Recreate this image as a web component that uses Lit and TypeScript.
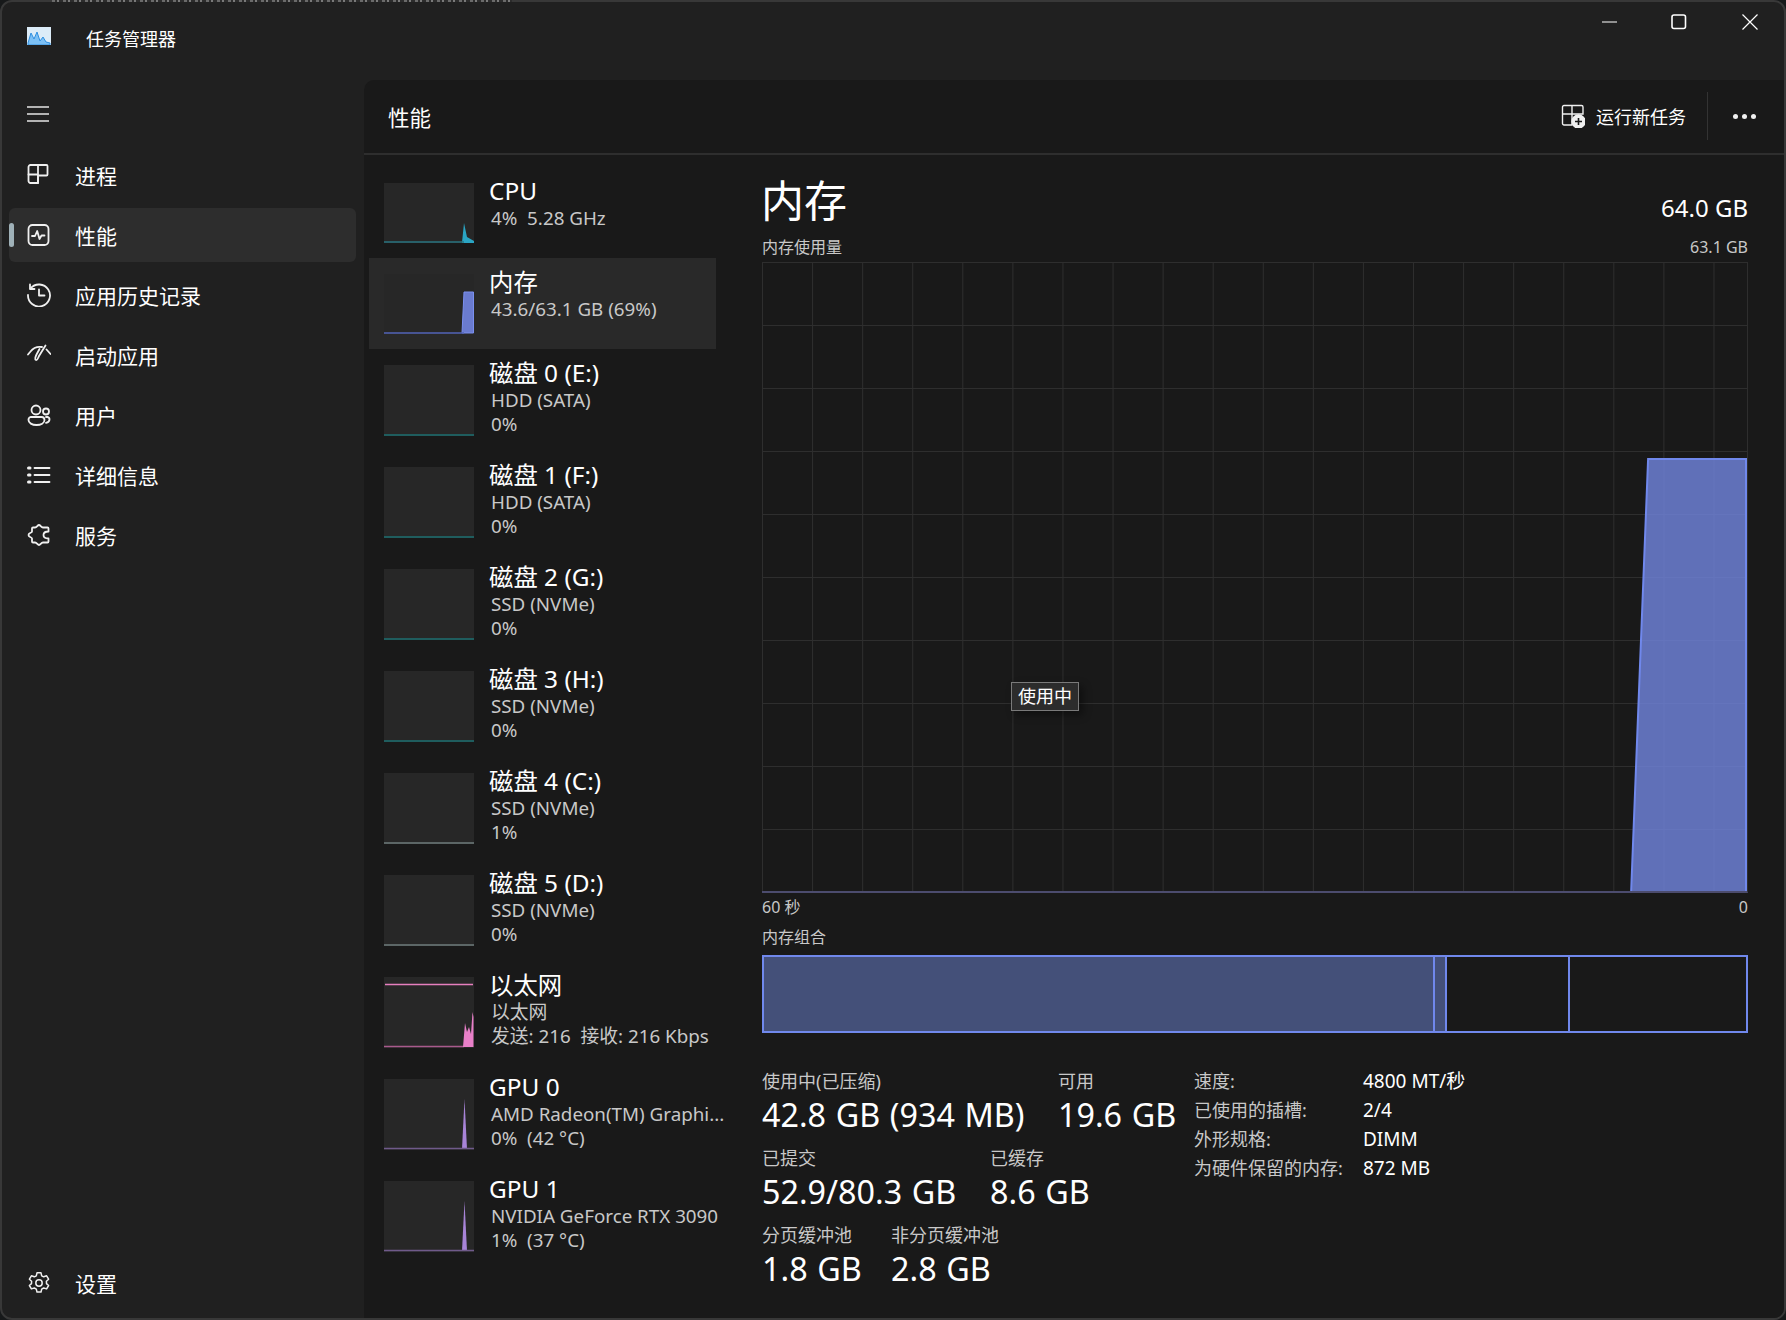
import { LitElement, html, css, svg } from "lit";
import { customElement } from "lit/decorators.js";

const navItems = [
  {
    label: "进程",
    icon: svg`<path d="M1.500 4a2 2 0 0 1 2-2h16a1 1 0 0 1 1 1v8.500a1 1 0 0 1-1 1H11V20H3.500a2 2 0 0 1-2-2z"/><path d="M11 2V20M1.500 11.500H11"/>`,
  },
  {
    label: "性能",
    active: true,
    icon: svg`<rect x="1.500" y="2" width="20" height="20" rx="4"/><path d="M5 13h3l2.200-5 2.300 8 2-3.500h3"/>`,
  },
  {
    label: "应用历史记录",
    icon: svg`<path d="M3.500 5.500A11 11 0 1 1 1 12"/><path d="M3 1.500v4.500h4.500M12 6.500v6h5.500"/>`,
  },
  {
    label: "启动应用",
    icon: svg`<path d="M1 11.500 3.500 8.500A12 12 0 0 1 15 4M19.500 6.500 23.500 11"/><path d="M18.500 2.500 12 13c-1 2-1.500 4.500-3 4s-.5-3.500 .5-5.500l3-5.500"/>`,
  },
  {
    label: "用户",
    icon: svg`<circle cx="9" cy="7" r="4.500"/><circle cx="19" cy="8.500" r="3"/><path d="M3.500 14h11a3 3 0 0 1 3 3c0 3-3.500 5-8 5s-8-2-8-5a3 3 0 0 1 2-3zM19 14h1.500a2.500 2.500 0 0 1 2 2.500c0 1.800-1.500 3-3.500 3.300"/>`,
  },
  {
    label: "详细信息",
    icon: svg`<path d="M7.500 5h15M7.500 12h15M7.500 19h15"/><path d="M1.500 5h1.500M1.500 12h1.500M1.500 19h1.500" stroke-width="3"/>`,
  },
  {
    label: "服务",
    icon: svg`<path transform="translate(0 .5)" d="M12 1.500c1.500 0 2 2.500 4 2.500h4.500a1 1 0 0 1 1 1v3c-2.500 0-5 1-5 3.500s2.500 3.500 5 3.500v3a1 1 0 0 1-1 1H16c-2 0-2.500 2.500-4 2.500s-2-2.500-4-2.500H6a1 1 0 0 1-1-1v-3c0-1.500-3.500-1-3.500-3.500s3.500-2 3.500-3.500V5a1 1 0 0 1 1-1h2c2 0 2.500-2.500 4-2.500z"/>`,
  },
];

const gearIcon = svg`<circle cx="12" cy="12" r="3.200"/><path d="M10 1.800h4l.7 3 2 1 2.900-1 2 3.400-2.200 2 .1 2.400 2.100 1.900-2 3.400-2.900-.9-2 1.100-.7 3h-4l-.7-3-2-1.100-2.900.9-2-3.400 2.100-1.900.1-2.400-2.200-2 2-3.400 2.900 1 2-1z"/>`;

interface Device {
  title: string;
  lines: string[];
  kind: string;
  selected?: boolean;
}

const devices: Device[] = [
  { title: "CPU", lines: ["4%  5.28 GHz"], kind: "cpu" },
  { title: "内存", lines: ["43.6/63.1 GB (69%)"], kind: "mem", selected: true },
  { title: "磁盘 0 (E:)", lines: ["HDD (SATA)", "0%"], kind: "disk" },
  { title: "磁盘 1 (F:)", lines: ["HDD (SATA)", "0%"], kind: "disk" },
  { title: "磁盘 2 (G:)", lines: ["SSD (NVMe)", "0%"], kind: "disk" },
  { title: "磁盘 3 (H:)", lines: ["SSD (NVMe)", "0%"], kind: "disk" },
  { title: "磁盘 4 (C:)", lines: ["SSD (NVMe)", "1%"], kind: "disk2" },
  { title: "磁盘 5 (D:)", lines: ["SSD (NVMe)", "0%"], kind: "disk2" },
  { title: "以太网", lines: ["以太网", "发送: 216  接收: 216 Kbps"], kind: "net" },
  { title: "GPU 0", lines: ["AMD Radeon(TM) Graphi...", "0%  (42 °C)"], kind: "gpu" },
  { title: "GPU 1", lines: ["NVIDIA GeForce RTX 3090", "1%  (37 °C)"], kind: "gpu" },
];

// little graph inside each thumbnail, coordinates in a 90 wide box
function thumbGraph(kind: string) {
  switch (kind) {
    case "cpu":
      return svg`<path d="M78 59.500 80 40l3 14 7 4v2H78z" fill="#2aa5c4"/><path d="M0 59h80" stroke="#2a7480" stroke-width="1.500"/>`;
    case "mem":
      return svg`<path d="M78 59 80 18h9.500v41z" fill="#6a7bd0" stroke="#7a90f0" stroke-width="1"/><path d="M0 59h80" stroke="#5365b8" stroke-width="1.500"/>`;
    case "disk":
      return svg`<path d="M0 70h90" stroke="#1f5d5e" stroke-width="2"/>`;
    case "disk2":
      return svg`<path d="M0 70h90" stroke="#5c6666" stroke-width="2"/>`;
    case "net":
      return svg`<path d="M1 7.500h88" stroke="#e67fbe" stroke-width="1.500"/><path d="M0 69.500h80" stroke="#a85a8c" stroke-width="1.500"/><path d="M79 70 81 46l2 9 2-5 2 7 1.500-22 1 5v30z" fill="#e87fc8"/>`;
    default:
      return svg`<path d="M78 70 80.500 20 83 70z" fill="#a884d8"/><path d="M0 69.500h90" stroke="#6f5a8a" stroke-width="1.500"/>`;
  }
}

@customElement("app-root")
export class AppRoot extends LitElement {
  static styles = css`
    :host {
      display: block;
      position: relative;
      width: 1786px;
      height: 1320px;
      background: #17191a;
      font-family: "Noto Sans", "Noto Sans CJK SC", sans-serif;
      color: #fff;
    }
    .sliver {
      position: absolute;
      left: 52px;
      top: 0;
      width: 460px;
      height: 2px;
      background: repeating-linear-gradient(
        to right,
        #6a6a6a 0 3px,
        #2c2c2c 3px 5px,
        #7a7a7a 5px 7px,
        #2c2c2c 7px 11px
      );
    }
    .window {
      box-sizing: border-box;
      width: 1786px;
      height: 1320px;
      border: 2px solid #383838;
      border-radius: 12px;
      background: #202020;
      display: grid;
      grid-template-columns: 362px 1fr;
      grid-template-rows: 78px 1fr;
      overflow: hidden;
    }
    .titlebar {
      grid-column: 1 / 3;
      display: flex;
      align-items: flex-start;
    }
    .app-icon {
      width: 24px;
      height: 18px;
      margin: 25px 0 0 25px;
    }
    .app-title {
      margin: 25px 0 0 35px;
      font-size: 18px;
      line-height: 24px;
      flex: 1;
    }
    .controls {
      display: flex;
    }
    .controls svg {
      display: block;
      width: 16px;
      height: 16px;
      fill: none;
      stroke: #fff;
      stroke-width: 1.200;
    }
    .ctl-min {
      margin: 12px 0 0 0;
    }
    .ctl-max {
      margin: 12px 0 0 53px;
    }
    .ctl-close {
      margin: 12px 26px 0 55px;
    }
    .sidebar {
      display: flex;
      flex-direction: column;
      padding: 10px 8px 8px 7px;
      box-sizing: border-box;
    }
    .burger {
      height: 48px;
      display: flex;
      align-items: center;
      padding-left: 18px;
      margin-bottom: 10px;
    }
    .burger svg {
      width: 22px;
      height: 16px;
      stroke: #e4e4e4;
      stroke-width: 1.500;
      fill: none;
    }
    .nav {
      display: flex;
      flex-direction: column;
      gap: 6px;
    }
    .item {
      position: relative;
      height: 54px;
      display: flex;
      align-items: center;
      gap: 24px;
      padding-left: 18px;
      border-radius: 6px;
      font-size: 21px;
    }
    .item.active {
      background: #2d2d2d;
    }
    .item.active::before {
      content: "";
      position: absolute;
      left: 0;
      top: 15px;
      width: 5px;
      height: 24px;
      border-radius: 3px;
      background: #9fb1b8;
    }
    .item svg {
      width: 24px;
      height: 24px;
      fill: none;
      stroke: #f0f0f0;
      stroke-width: 1.800;
      stroke-linecap: round;
      stroke-linejoin: round;
      flex: none;
    }
    .settings {
      margin-top: auto;
    }
    .settings svg {
      stroke-width: 1.500;
    }
    .panel {
      background: #191919;
      border-top-left-radius: 10px;
      display: flex;
      flex-direction: column;
      min-height: 0;
    }
    .panel-head {
      box-sizing: border-box;
      height: 75px;
      border-bottom: 2px solid #2e2e2e;
      display: flex;
      align-items: center;
      padding: 0 28px 2px 24px;
    }
    .panel-head h1 {
      margin: 2px 0 0;
      flex: 1;
      font-size: 21.500px;
      font-weight: 400;
    }
    .run {
      display: flex;
      align-items: center;
      gap: 11px;
      font-size: 18px;
    }
    .run svg {
      width: 24px;
      height: 24px;
      fill: none;
      stroke: #f0f0f0;
      stroke-width: 1.400;
    }
    .divider {
      width: 1px;
      height: 48px;
      margin: 0 25px 0 21px;
      background: #333;
    }
    .more {
      display: flex;
      gap: 4px;
      margin-top: 2px;
    }
    .more i {
      width: 5px;
      height: 5px;
      border-radius: 50%;
      background: #f0f0f0;
    }
    .body {
      display: flex;
      flex: 1;
      min-height: 0;
    }
    .list {
      width: 398px;
      flex: none;
      box-sizing: border-box;
      padding: 12px 0 0 5px;
    }
    .row {
      box-sizing: border-box;
      width: 347px;
      height: 102px;
      display: flex;
      gap: 15px;
      padding: 16px 0 0 15px;
    }
    .row.short {
      height: 91px;
    }
    .row.selected {
      background: #292929;
    }
    .thumb {
      display: block;
      flex: none;
      width: 90px;
      height: 71px;
      background: #272727;
    }
    .short .thumb {
      height: 60px;
    }
    .info {
      margin-top: -8px;
    }
    .info .name {
      font-size: 24.400px;
      line-height: 31px;
      white-space: nowrap;
    }
    .info .sub {
      font-size: 18.800px;
      line-height: 24px;
      color: #c8c8c8;
      padding-left: 2px;
      white-space: pre;
    }
    .main {
      width: 986px;
      flex: none;
    }
    .heading {
      display: flex;
      justify-content: space-between;
      padding-top: 18px;
    }
    .heading h2 {
      margin: 0 0 0 -1px;
      font-size: 43px;
      line-height: 56px;
      font-weight: 400;
    }
    .heading .total {
      font-size: 24px;
      line-height: 32px;
      margin-top: 19px;
    }
    .caption {
      display: flex;
      justify-content: space-between;
      font-size: 16px;
      line-height: 22px;
      color: #c8c8c8;
    }
    .cap-usage {
      margin-top: 7px;
    }
    .chart {
      position: relative;
      box-sizing: border-box;
      margin-top: 4px;
      height: 631px;
      border-bottom: 2px solid #4c4c6e;
      border-right: 1px solid #2e2e2e;
      background-color: #191919;
      background-image: linear-gradient(to right, #2e2e2e 1px, transparent 1px),
        linear-gradient(to bottom, #2e2e2e 1px, transparent 1px);
      background-size: 50.08px 63px;
    }
    .chart svg {
      position: absolute;
      inset: 0;
      width: 100%;
      height: 100%;
    }
    .tip {
      position: absolute;
      left: 249px;
      top: 420px;
      padding: 0 6px;
      height: 29px;
      box-sizing: border-box;
      border: 1.500px solid #7a7a7a;
      background: #2c2c2c;
      box-shadow: 4px 4px 8px rgba(0, 0, 0, 0.4);
      font-size: 18px;
      line-height: 26px;
      white-space: nowrap;
    }
    .cap-axis {
      margin-top: 3px;
    }
    .cap-comp {
      margin-top: 8px;
    }
    .bar {
      box-sizing: border-box;
      margin-top: 7px;
      height: 78px;
      border: 2px solid #7088ec;
      display: flex;
    }
    .seg {
      box-sizing: border-box;
      border-right: 2px solid #7088ec;
    }
    .seg.fill {
      background: #445079;
    }
    .seg:last-child {
      border-right: 0;
      flex: 1;
    }
    .stats {
      display: flex;
      margin-top: 37px;
    }
    .left {
      width: 432px;
      flex: none;
      display: flex;
      flex-direction: column;
      gap: 13px;
    }
    .stat-row {
      display: grid;
    }
    .r1 {
      grid-template-columns: 296px auto;
    }
    .r2 {
      grid-template-columns: 228px auto;
    }
    .r3 {
      grid-template-columns: 129px auto;
    }
    .stat .k {
      font-size: 18px;
      line-height: 24px;
      margin: -1px 0 1px;
      color: #c8c8c8;
    }
    .stat .v {
      font-size: 32.300px;
      word-spacing: 1.200px;
      line-height: 40px;
      white-space: nowrap;
    }
    .details {
      display: grid;
      grid-template-columns: 169px auto;
      grid-auto-rows: 29px;
      font-size: 19px;
      line-height: 29px;
      margin-top: -3px;
      white-space: nowrap;
    }
    .details .dk {
      font-size: 18px;
      color: #c8c8c8;
    }
  `;

  render() {
    return html`
      <div class="window">
        <div class="titlebar">
          <svg class="app-icon" viewBox="0 0 24 18">
            <rect width="24" height="18" fill="#dcecf8" />
            <path d="M1 16 4 6l3 6 3-7 3 9 3-4 3 5 4 1v2H1z" fill="#7cc0f5" stroke="#2f8fe0" stroke-width="1" />
          </svg>
          <div class="app-title">任务管理器</div>
          <div class="controls">
            <svg class="ctl-min" viewBox="0 0 16 16"><path d="M0 8h15" /></svg>
            <svg class="ctl-max" viewBox="0 0 16 16"><rect x="1" y="1" width="13.500" height="13.500" rx="2" stroke-width="1.600" /></svg>
            <svg class="ctl-close" viewBox="0 0 16 16"><path d="M.5.5l15 15M15.500.5l-15 15" /></svg>
          </div>
        </div>
        <nav class="sidebar">
          <div class="burger">
            <svg viewBox="0 0 22 16"><path d="M0 1h22M0 8h22M0 15h22" /></svg>
          </div>
          <div class="nav">
            ${navItems.map(
              (n) => html`<div class="item ${n.active ? "active" : ""}">
                <svg viewBox="0 0 24 24">${n.icon}</svg><span>${n.label}</span>
              </div>`
            )}
          </div>
          <div class="item settings">
            <svg viewBox="0 0 24 24">${gearIcon}</svg><span>设置</span>
          </div>
        </nav>
        <section class="panel">
          <header class="panel-head">
            <h1>性能</h1>
            <div class="run">
              <svg viewBox="0 0 24 24">
                <path d="M11 1.500h9.500a1.500 1.500 0 0 1 1.500 1.500v7H11zM11 1.500H3A1.500 1.500 0 0 0 1.500 3v7H11v11H3a1.500 1.500 0 0 1-1.500-1.500V10" />
                <circle cx="17.500" cy="17.500" r="6.500" fill="#f0f0f0" />
                <path d="M17.500 14v7M14 17.500h7" stroke="#191919" stroke-width="1.600" />
              </svg>
              <span>运行新任务</span>
            </div>
            <div class="divider"></div>
            <div class="more"><i></i><i></i><i></i></div>
          </header>
          <div class="body">
            <div class="list">
              ${devices.map((d) => this.renderRow(d))}
            </div>
            <div class="main">
              <div class="heading">
                <h2>内存</h2>
                <div class="total">64.0 GB</div>
              </div>
              <div class="caption cap-usage"><span>内存使用量</span><span>63.1 GB</span></div>
              <div class="chart">
                <svg viewBox="0 0 986 629" preserveAspectRatio="none">
                  <path d="M870 630 887 197H985V630z" fill="rgba(112,132,220,.82)" />
                  <path d="M870 630 887 197H985V630" fill="none" stroke="#7088ec" stroke-width="2" />
                </svg>
                <div class="tip">使用中</div>
              </div>
              <div class="caption cap-axis"><span>60 秒</span><span>0</span></div>
              <div class="caption cap-comp"><span>内存组合</span></div>
              <div class="bar">
                <div class="seg fill" style="width:671px"></div>
                <div class="seg fill" style="width:12px"></div>
                <div class="seg" style="width:123px"></div>
                <div class="seg"></div>
              </div>
              <div class="stats">
                <div class="left">
                  <div class="stat-row r1">
                    ${this.stat("使用中(已压缩)", "42.8 GB (934 MB)")}
                    ${this.stat("可用", "19.6 GB")}
                  </div>
                  <div class="stat-row r2">
                    ${this.stat("已提交", "52.9/80.3 GB")}
                    ${this.stat("已缓存", "8.6 GB")}
                  </div>
                  <div class="stat-row r3">
                    ${this.stat("分页缓冲池", "1.8 GB")}
                    ${this.stat("非分页缓冲池", "2.8 GB")}
                  </div>
                </div>
                <div class="details">
                  <span class="dk">速度:</span><span>4800 MT/秒</span>
                  <span class="dk">已使用的插槽:</span><span>2/4</span>
                  <span class="dk">外形规格:</span><span>DIMM</span>
                  <span class="dk">为硬件保留的内存:</span><span>872 MB</span>
                </div>
              </div>
            </div>
          </div>
        </section>
      </div>
      <div class="sliver"></div>
    `;
  }

  renderRow(d: Device) {
    const short = d.lines.length === 1;
    const h = short ? 60 : 71;
    return html`<div class="row ${short ? "short" : ""} ${d.selected ? "selected" : ""}">
      <svg class="thumb" viewBox="0 0 90 ${h}" preserveAspectRatio="none">${thumbGraph(d.kind)}</svg>
      <div class="info">
        <div class="name">${d.title}</div>
        ${d.lines.map((l) => html`<div class="sub">${l}</div>`)}
      </div>
    </div>`;
  }

  stat(k: string, v: string) {
    return html`<div class="stat"><div class="k">${k}</div><div class="v">${v}</div></div>`;
  }
}
